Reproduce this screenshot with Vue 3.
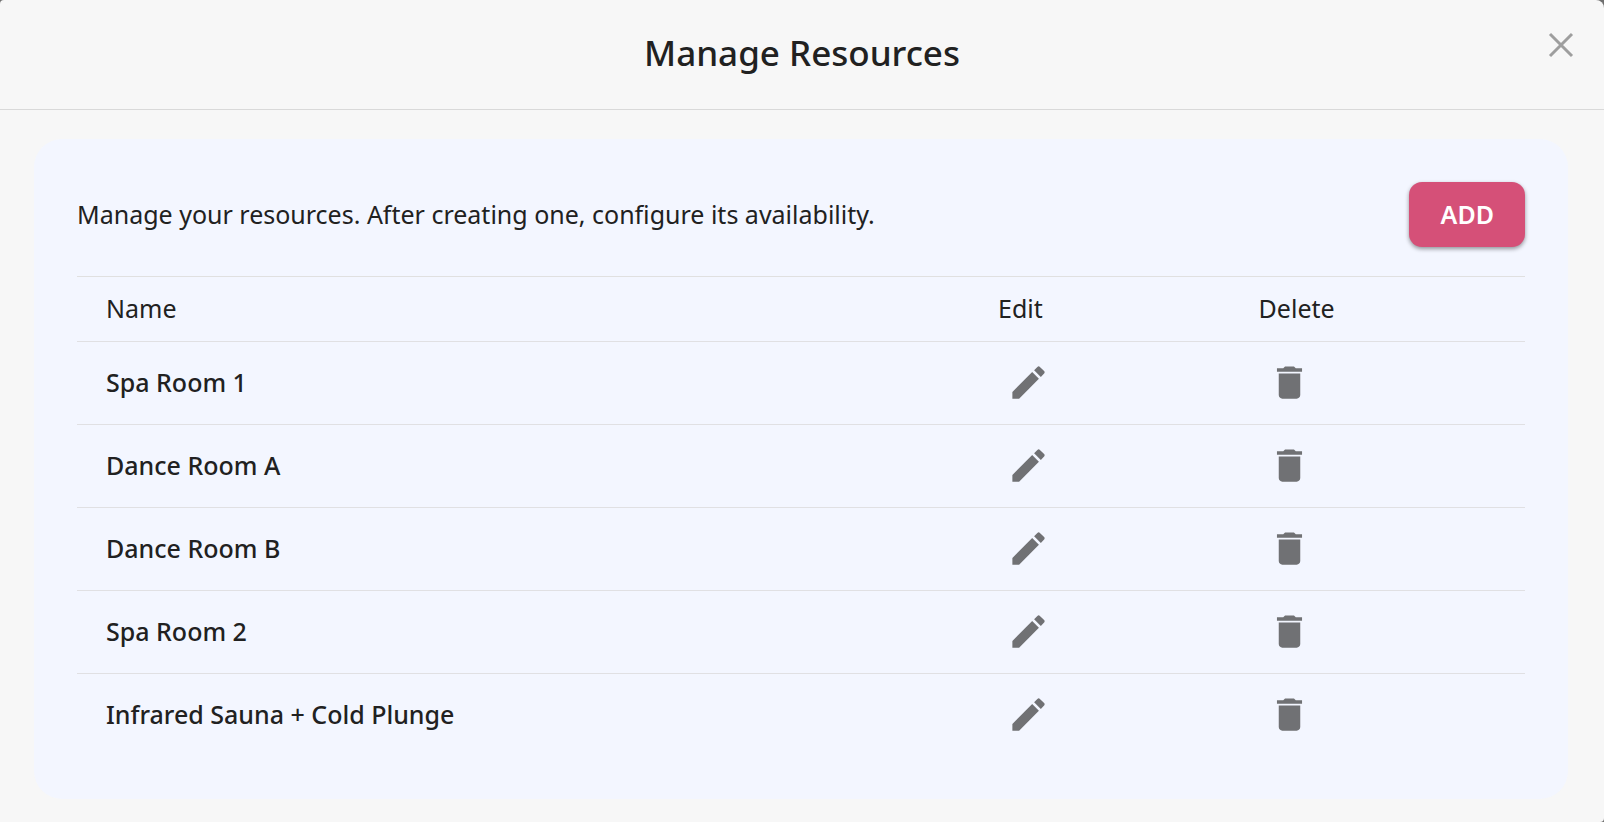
<script setup>
import { ref } from 'vue'

const resources = ref([
  { id: 1, name: 'Spa Room 1' },
  { id: 2, name: 'Dance Room A' },
  { id: 3, name: 'Dance Room B' },
  { id: 4, name: 'Spa Room 2' },
  { id: 5, name: 'Infrared Sauna + Cold Plunge' },
])
</script>

<template>
  <main class="dialog" role="dialog" aria-labelledby="dialog-title">
    <header class="header">
      <h1 id="dialog-title" class="title">Manage Resources</h1>
      <button class="close" type="button" aria-label="Close">
        <svg viewBox="0 0 24 24" aria-hidden="true">
          <path d="M1 1 23 23M23 1 1 23" />
        </svg>
      </button>
    </header>

    <section class="panel">
      <div class="intro">
        <p class="lead">Manage your resources. After creating one, configure its availability.</p>
        <button class="add" type="button">ADD</button>
      </div>

      <table class="table">
        <colgroup>
          <col />
          <col class="col-edit" />
          <col class="col-delete" />
        </colgroup>
        <thead>
          <tr>
            <th scope="col">Name</th>
            <th scope="col">Edit</th>
            <th scope="col">Delete</th>
          </tr>
        </thead>
        <tbody>
          <tr v-for="item in resources" :key="item.id">
            <td class="name">{{ item.name }}</td>
            <td>
              <button class="icon" type="button" :aria-label="`Edit ${item.name}`">
                <svg viewBox="0 0 24 24" aria-hidden="true">
                  <path d="M3 17.25V21h3.75L17.81 9.94l-3.75-3.75L3 17.25zM20.71 7.04c.39-.39.39-1.02 0-1.41l-2.34-2.34a.9959.9959 0 0 0-1.41 0l-1.83 1.83 3.75 3.75 1.83-1.83z" />
                </svg>
              </button>
            </td>
            <td>
              <button class="icon" type="button" :aria-label="`Delete ${item.name}`">
                <svg viewBox="0 0 24 24" aria-hidden="true">
                  <path d="M6 19c0 1.1.9 2 2 2h8c1.1 0 2-.9 2-2V7H6v12zM19 4h-3.500l-1-1h-5l-1 1H5v2h14V4z" />
                </svg>
              </button>
            </td>
          </tr>
        </tbody>
      </table>
    </section>
  </main>
</template>

<style>
body {
  background: #6f6f6f;
}
</style>

<style scoped>
.dialog {
  box-sizing: border-box;
  min-height: 100vh;
  padding-bottom: 23px;
  border-radius: 4px 8px 4px 0;
  background: #f7f7f7;
  color: #212121;
  font-family: "Noto Sans", sans-serif;
  font-size: 25px;
  line-height: 36px;
}

.header {
  position: relative;
  padding: 29px 80px 32px;
  border-bottom: 1px solid #d9d9d9;
  text-align: center;
}

.title {
  margin: 0;
  font-size: 35px;
  font-weight: 500;
  line-height: 48px;
}

button {
  border: 0;
  font: inherit;
  cursor: pointer;
}

.close {
  position: absolute;
  top: 25px;
  right: 23px;
  padding: 8px;
  background: none;
}

.close svg {
  display: block;
  width: 24px;
  height: 24px;
  overflow: visible;
  fill: none;
  stroke: #9e9e9e;
  stroke-width: 3;
}

.panel {
  margin: 29px 36px 0 34px;
  padding: 43px;
  border-radius: 28px;
  background: #f3f6ff;
}

.intro {
  display: flex;
  align-items: center;
  justify-content: space-between;
  gap: 24px;
  margin-bottom: 29px;
}

.lead {
  margin: 0;
  padding-bottom: 2px;
}

.add {
  padding: 14px 31px 15px 32px;
  border-radius: 13px;
  background: #d55078;
  color: #fff;
  font-weight: 600;
  box-shadow: 0 2px 4px rgba(0, 0, 0, 0.4);
}

.table {
  width: 100%;
  border-collapse: separate;
  border-spacing: 0;
  border-top: 1px solid #e0e0e0;
  table-layout: fixed;
}

.col-edit {
  width: 18%;
}

.col-delete {
  width: 20.4%;
}

th,
td {
  padding: 0 29px;
  border-bottom: 1px solid #e0e0e3;
  text-align: left;
}

th {
  padding-top: 13px;
  padding-bottom: 15px;
  font-weight: 400;
}

td {
  padding-top: 10px;
  padding-bottom: 10px;
}

tbody tr:last-child td {
  border-bottom: 0;
}

.name {
  padding-bottom: 12px;
  font-weight: 500;
}

.icon {
  display: block;
  padding: 9px 10px 10px 9px;
  background: none;
}

.icon svg {
  display: block;
  width: 43px;
  height: 43px;
  fill: #707174;
}
</style>
